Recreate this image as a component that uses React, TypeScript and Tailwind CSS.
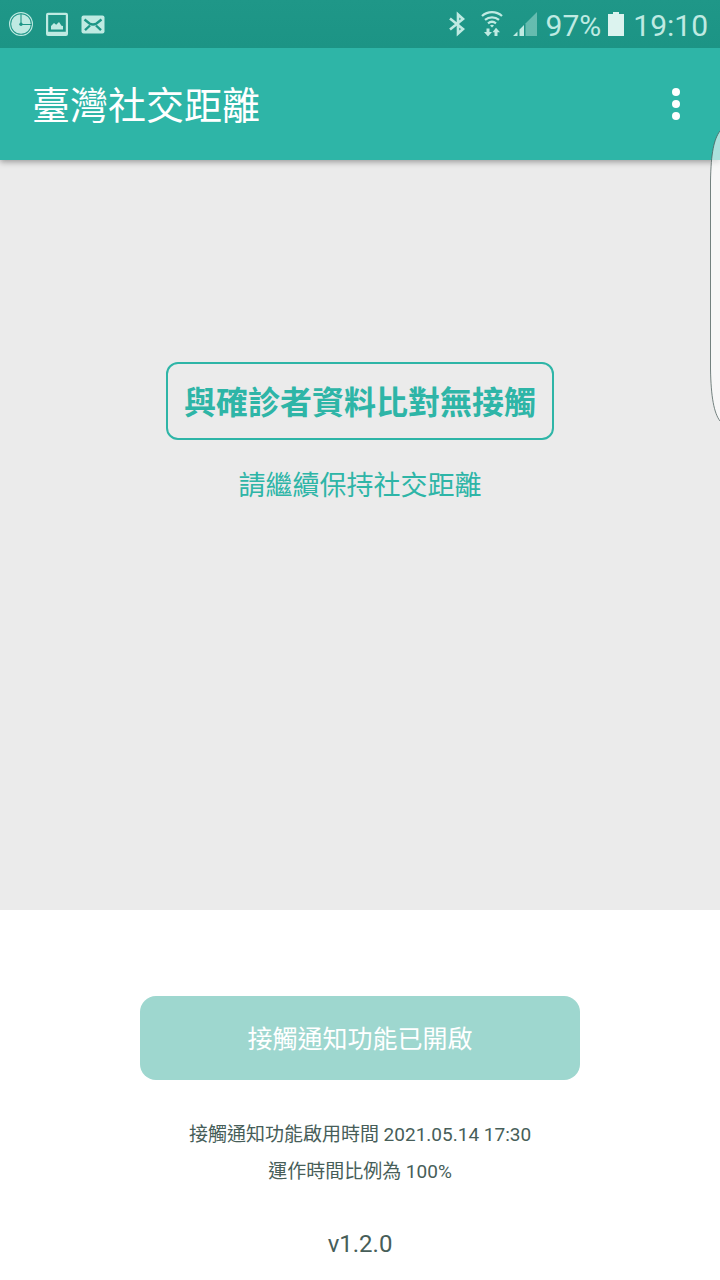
function NotificationIcons() {
  return (
    <div className="flex items-center gap-3 text-[#bfeae2]" aria-hidden="true">
      <svg width="24" height="24" viewBox="0 0 24 24">
        <circle cx="12" cy="12" r="11.4" fill="none" stroke="currentColor" strokeWidth="1.2" />
        <circle cx="12" cy="12" r="9.8" fill="currentColor" />
        <path d="M12 1.5V12.5H23" fill="none" stroke="#1d9687" strokeWidth="1.1" />
        <circle cx="12" cy="12.3" r="1.7" fill="#1d9687" />
      </svg>
      <svg width="24" height="24" viewBox="0 0 24 24">
        <path
          fill="currentColor"
          fillRule="evenodd"
          d="M3 .8H21a2 2 0 0 1 2 2V22a2 2 0 0 1-2 2H3a2 2 0 0 1-2-2V2.800A2 2 0 0 1 3 .8ZM3.200 3V19.800H20.800V3Z"
        />
        <path fill="currentColor" d="M6 17.500V14l3-3 2.200 1.700L14 10l2.500 3.700 1.500.3v3.500Z" />
      </svg>
      <svg width="24" height="24" viewBox="0 0 24 24">
        <rect x=".5" y="3.500" width="23" height="18" rx="2" fill="currentColor" />
        <path
          d="M3.500 7.500 8.500 11.500Q12 13.500 15.500 11.500L20.500 7.500M4 18.200 9 13.500M20 18.200 15 13.500"
          fill="none"
          stroke="#1d9687"
          strokeWidth="2.400"
        />
      </svg>
    </div>
  );
}

function StatusBar() {
  return (
    <div className="z-20 flex h-12 items-center justify-between bg-linear-to-b from-[#1f9788] to-[#1c9485] pr-3 pl-[9px]">
      <NotificationIcons />
      <div className="flex items-center text-[#bfeae2]">
        <svg width="18" height="26" viewBox="0 0 18 26" className="mr-3.5" aria-label="Bluetooth">
          <path
            d="M2 7.500 15 18 10 22.500V3.500L15 8 2 18.500"
            fill="none"
            stroke="currentColor"
            strokeWidth="2.600"
          />
        </svg>
        <svg width="24" height="26" viewBox="0 0 24 26" className="mr-2" aria-label="Wi-Fi">
          <path
            d="M2 5a15 15 0 0 1 20 0M5 8.800a11 11 0 0 1 14 0M8 12.300a6.500 6.500 0 0 1 8 0"
            fill="none"
            stroke="currentColor"
            strokeWidth="2.300"
          />
          <path d="M10 14.500q2-1.600 4 0l-2 2Z" fill="currentColor" />
          <path
            d="M6.500 17.500h3v3.500h2.500L8 25.500 4 21h2.500ZM14.500 25h3v-3.800h2.500L16 16.800 12.500 21.200h2Z"
            fill="currentColor"
          />
        </svg>
        <svg width="26" height="26" viewBox="0 0 26 26" className="mr-2" aria-label="Signal">
          <path d="M13.500 12.500 25 1V25H13.500Z" fill="currentColor" opacity=".45" />
          <path d="M1 25 5.500 20.500V25ZM7.500 25V18.500L12 14V25Z" fill="currentColor" />
        </svg>
        <span className="pt-1 text-[30px] leading-9">97%</span>
        <svg width="18" height="26" viewBox="0 0 18 26" className="mx-1.5" aria-label="Battery">
          <path d="M6 1h6v2H17V25H1V3H6Z" fill="#dcf3ef" />
        </svg>
        <time className="ml-0.5 pt-1 text-[30px] leading-9">19:10</time>
      </div>
    </div>
  );
}

export default function App() {
  return (
    <div className="relative flex min-h-screen flex-col overflow-hidden bg-white font-[Roboto,'Noto_Sans_CJK_TC',sans-serif]">
      <StatusBar />
      <header className="z-10 flex h-28 items-center justify-between bg-[#2eb5a7] px-8 shadow-[0_2px_6px_rgba(0,0,0,0.35)]">
        <h1 className="pt-1 text-[38px] leading-[56px] text-white">臺灣社交距離</h1>
        <button type="button" aria-label="選單" className="flex h-12 w-6 items-center justify-center">
          <svg width="8" height="32" viewBox="0 0 8 32" fill="white">
            <circle cx="4" cy="4" r="4" />
            <circle cx="4" cy="16" r="4" />
            <circle cx="4" cy="28" r="4" />
          </svg>
        </button>
      </header>

      <main className="flex flex-1 flex-col items-center bg-[#ebebeb] pt-[202px] text-[#2eb5a7]">
        <h2 className="rounded-xl border-2 border-[#2eb5a7] px-4 pt-3.5 pb-2.5 text-[32px] leading-[50px] font-bold">
          與確診者資料比對無接觸
        </h2>
        <p className="mt-[26px] text-[27px] leading-10">請繼續保持社交距離</p>
      </main>

      <footer className="flex flex-col items-center px-8 pt-[86px] pb-[18px] text-[#475e59]">
        <button
          type="button"
          className="h-[84px] w-full max-w-[440px] rounded-2xl bg-[#9ed7cf] pt-1 text-[25px] text-white"
        >
          接觸通知功能已開啟
        </button>
        <p className="mt-9 text-center text-[19px] leading-[37px]">
          接觸通知功能啟用時間 2021.05.14 17:30
          <br />
          運作時間比例為 100%
        </p>
        <p className="mt-9 text-[24px] leading-9">v1.2.0</p>
      </footer>

      <svg
        width="10"
        height="294"
        viewBox="0 0 10 294"
        className="absolute top-[129px] right-0 z-20"
        aria-hidden="true"
      >
        <path
          d="M10 2C4 10 1 24 .5 52V240C1 268 4 284 10 292"
          fill="white"
          fillOpacity=".6"
          stroke="#4a5c59"
          strokeOpacity=".75"
        />
      </svg>
    </div>
  );
}
